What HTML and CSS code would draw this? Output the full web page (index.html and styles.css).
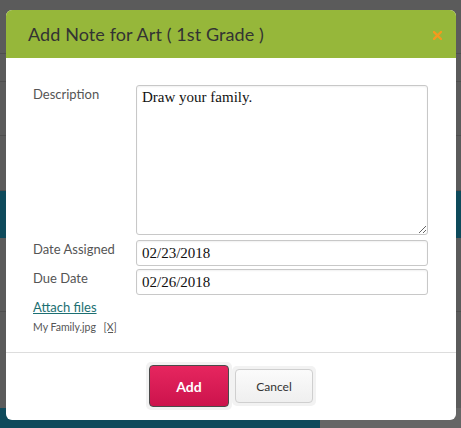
FILE: index.html
```html
<!DOCTYPE html>
<html>
<head>
<meta charset="utf-8">
<link rel="stylesheet" href="styles.css">
</head>
<body>
<div class="backdrop">
  <div class="bg-row r1"></div>
  <div class="bg-row r2"></div>
  <div class="bg-row r3"></div>
  <div class="bg-row r4"></div>
  <div class="bg-row teal"></div>
  <div class="bg-row r5"></div>
  <div class="bg-row r6"></div>
  <div class="bg-bottom"><div class="bt"></div><div class="bg"></div></div>
</div>
<div class="modal">
  <div class="modal-head">
    <h1 class="title">Add Note for Art ( 1st Grade )</h1>
    <svg class="close" width="9" height="9" viewBox="0 0 9 9"><path d="M1 1L8 8M8 1L1 8" stroke="#f39a1e" stroke-width="2.4" stroke-linecap="square"/></svg>
  </div>
  <div class="modal-body">
    <div class="row">
      <label class="lbl">Description</label>
      <textarea class="ta">Draw your family.</textarea>
    </div>
    <div class="row r-date">
      <label class="lbl">Date Assigned</label>
      <input class="inp" type="text" value="02/23/2018">
    </div>
    <div class="row r-due">
      <label class="lbl">Due Date</label>
      <input class="inp" type="text" value="02/26/2018">
    </div>
    <a class="attach" href="#">Attach files</a>
    <div class="file">My Family.jpg <span class="x">[X]</span></div>
  </div>
  <div class="modal-foot">
    <span class="ring"><button class="btn add">Add</button></span>
    <span class="ring"><button class="btn cancel">Cancel</button></span>
  </div>
</div>
</body>
</html>
```
FILE: styles.css
```css
html, body { margin: 0; padding: 0; }
body {
  width: 461px; height: 428px; overflow: hidden; position: relative;
  background: #5b5b5b;
  font-family: "Lato", "Open Sans", sans-serif;
}
.backdrop { display: flex; flex-direction: column; height: 428px; }
.bg-row { border-bottom: 1px solid #4e4e4e; }
.r1 { height: 53px; }
.r2 { height: 27px; }
.r3 { height: 53px; }
.r4 { height: 54px; }
.teal { height: 47px; background: #0e4a5b; border: 0; }
.r5 { height: 73px; }
.r6 { flex: 1; border: 0; }
.bg-bottom { height: 20px; display: flex; }
.bt { width: 320px; background: #0e4a5b; }
.bg { flex: 1; background: #666; }

.modal {
  position: absolute; left: 6px; top: 10px; width: 450px; height: 410px;
  background: #fff; border-radius: 6px; display: flex; flex-direction: column;
  overflow: hidden;
}
.modal-head {
  height: 48px; background: #96b73a; display: flex; align-items: center;
  padding: 0 14px 0 22px; justify-content: space-between;
}
.title { margin: 0; font-size: 18px; font-weight: 400; color: #333; letter-spacing: 0.1px; }
.close { margin-top: 2px; }
.modal-body { padding: 27px 0 0 27px; display: flex; flex-direction: column; flex: 1; }
.row { display: flex; align-items: flex-start; }
.lbl { width: 103px; font-size: 13px; color: #555; padding-top: 1px; }
.ta {
  width: 292px; height: 150px; box-sizing: border-box; margin: 0;
  border: 1px solid #c8c8c8; border-radius: 3px; padding: 3px 5px;
  font-family: "Liberation Serif", serif; font-size: 15px; color: #111;
  resize: both; box-shadow: inset 0 1px 2px rgba(0,0,0,0.06);
}
.r-date { margin-top: 5px; }
.r-due { margin-top: 3px; }
.inp {
  width: 292px; height: 26px; box-sizing: border-box; margin: 0;
  border: 1px solid #c8c8c8; border-radius: 3px; padding: 0 5px;
  font-family: "Liberation Serif", serif; font-size: 15px; color: #111;
  box-shadow: inset 0 1px 2px rgba(0,0,0,0.06);
}
.attach { margin-top: 4px; font-size: 13px; color: #1c6f72; text-decoration: underline; align-self: flex-start; }
.file { margin-top: 6px; font-size: 10.5px; color: #555; }
.x { margin-left: 5px; text-decoration: underline; }
.modal-foot {
  height: 66px; border-top: 1px solid #ddd; display: flex; justify-content: center;
  align-items: center; gap: 0; padding-bottom: 1px;
}
.ring { background: #f2f2f2; border-radius: 5px; padding: 3px; display: inline-flex; }
.btn { font-family: "Lato", "Open Sans", sans-serif; border-radius: 4px; cursor: pointer; }
.add {
  width: 80px; height: 42px; background: linear-gradient(#e6265f, #cc134c);
  border: 1px solid #4a4a4a; color: #fff; font-size: 14px; font-weight: 700;
}
.cancel {
  width: 78px; height: 34px; background: linear-gradient(#fbfbfb, #efefef);
  border: 1px solid #cfcfcf; color: #333; font-size: 12px;
}
```
